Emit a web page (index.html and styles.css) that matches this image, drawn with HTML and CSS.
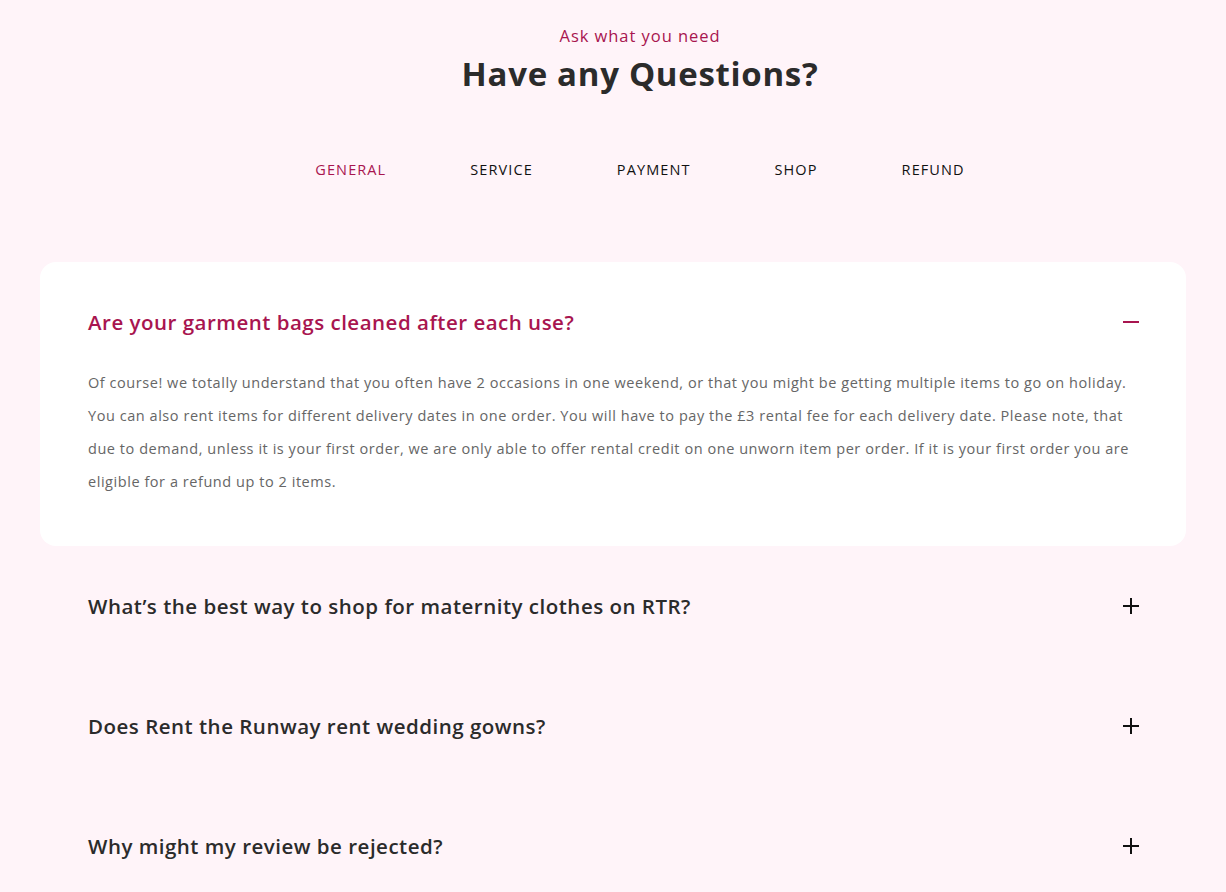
FILE: index.html
```html
<!DOCTYPE html>
<html lang="en">
<head>
<meta charset="utf-8">
<title>Have any Questions?</title>
<link rel="stylesheet" href="styles.css">
</head>
<body>
<section class="faq">
  <header class="faq-head">
    <p class="eyebrow">Ask what you need</p>
    <h1 class="title">Have any Questions?</h1>
  </header>
  <nav class="tabs">
    <a class="tab active" href="#">GENERAL</a>
    <a class="tab" href="#">SERVICE</a>
    <a class="tab" href="#">PAYMENT</a>
    <a class="tab" href="#">SHOP</a>
    <a class="tab" href="#">REFUND</a>
  </nav>
  <div class="list">
    <div class="item open">
      <div class="q">
        <span class="q-text">Are your garment bags cleaned after each use?</span>
        <svg class="icon" width="16" height="16" viewBox="0 0 16 16"><rect x="0" y="7" width="16" height="2" fill="currentColor"/></svg>
      </div>
      <p class="a">Of course! we totally understand that you often have 2 occasions in one weekend, or that you might be getting multiple items to go on holiday. You can also rent items for different delivery dates in one order. You will have to pay the £3 rental fee for each delivery date. Please note, that due to demand, unless it is your first order, we are only able to offer rental credit on one unworn item per order. If it is your first order you are eligible for a refund up to 2 items.</p>
    </div>
    <div class="item">
      <div class="q">
        <span class="q-text">What’s the best way to shop for maternity clothes on RTR?</span>
        <svg class="icon" width="16" height="16" viewBox="0 0 16 16"><rect x="0" y="7" width="16" height="2" fill="currentColor"/><rect x="7" y="0" width="2" height="16" fill="currentColor"/></svg>
      </div>
    </div>
    <div class="item">
      <div class="q">
        <span class="q-text">Does Rent the Runway rent wedding gowns?</span>
        <svg class="icon" width="16" height="16" viewBox="0 0 16 16"><rect x="0" y="7" width="16" height="2" fill="currentColor"/><rect x="7" y="0" width="2" height="16" fill="currentColor"/></svg>
      </div>
    </div>
    <div class="item">
      <div class="q">
        <span class="q-text">Why might my review be rejected?</span>
        <svg class="icon" width="16" height="16" viewBox="0 0 16 16"><rect x="0" y="7" width="16" height="2" fill="currentColor"/><rect x="7" y="0" width="2" height="16" fill="currentColor"/></svg>
      </div>
    </div>
  </div>
</section>
</body>
</html>
```

FILE: styles.css
```css
* { box-sizing: border-box; }
html, body { margin: 0; padding: 0; }
body {
  background: #fff4f9;
  font-family: "Open Sans", "Noto Sans", sans-serif;
  color: #2b2b2b;
  height: 892px;
  overflow: hidden;
}
.faq {
  width: 1146px;
  margin: 0 auto;
  padding-top: 25px;
}
.faq-head {
  text-align: center;
  padding-left: 54px;
}
.eyebrow {
  margin: 0;
  color: #a8154f;
  font-size: 16.5px;
  line-height: 22px;
  letter-spacing: 0.95px;
}
.title {
  margin: 11px 0 0;
  font-size: 33px;
  line-height: 32px;
  font-weight: 700;
  color: #2b2b2b;
  letter-spacing: 0.7px;
}
.tabs {
  display: flex;
  justify-content: center;
  gap: 84px;
  margin-top: 71px;
  padding-left: 54px;
}
.tab {
  font-size: 14.5px;
  line-height: 18px;
  font-weight: 500;
  color: #111;
  text-decoration: none;
  letter-spacing: 1.1px;
}
.tab.active { color: #a8154f; }
.list { margin-top: 83px; }
.item {
  padding: 48px 47px 48px 48px;
  border-radius: 16px;
}
.item.open { background: #fff; }
.q {
  display: flex;
  justify-content: space-between;
  align-items: center;
  height: 24px;
}
.q-text {
  font-size: 20.5px;
  line-height: 24px;
  font-weight: 600;
  color: #2b2b2b;
  letter-spacing: 0.5px;
}
.item.open .q-text, .item.open .icon { color: #a8154f; }
.icon { color: #111; flex: none; }
.a {
  margin: 32px 0 0;
  font-size: 14.5px;
  line-height: 33px;
  color: #666;
  letter-spacing: 0.55px;
}
```
